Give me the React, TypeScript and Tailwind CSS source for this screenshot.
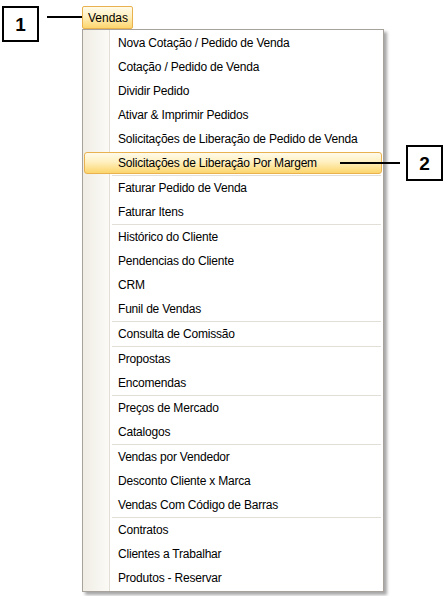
const groups: string[][] = [
  [
    "Nova Cotação / Pedido de Venda",
    "Cotação / Pedido de Venda",
    "Dividir Pedido",
    "Ativar & Imprimir Pedidos",
    "Solicitações de Liberação de Pedido de Venda",
    "Solicitações de Liberação Por Margem",
  ],
  ["Faturar Pedido de Venda", "Faturar Itens"],
  ["Histórico do Cliente", "Pendencias do Cliente", "CRM", "Funil de Vendas"],
  ["Consulta de Comissão"],
  ["Propostas", "Encomendas"],
  ["Preços de Mercado", "Catalogos"],
  ["Vendas por Vendedor", "Desconto Cliente x Marca", "Vendas Com Código de Barras"],
  ["Contratos", "Clientes a Trabalhar", "Produtos - Reservar"],
];

const active = "Solicitações de Liberação Por Margem";

const MenuItem = ({ label }: { label: string }) => {
  const isActive = label === active;
  return (
    <div className="h-[24px] py-[1px]">
      <div
        className={
          isActive
            ? "h-[22px] flex items-center pl-[33px] border border-[#e9b24f] rounded-[3px] bg-[linear-gradient(to_bottom,#fffbea_0%,#fff0c0_45%,#fcd56c_100%)]"
            : "h-[22px] flex items-center pl-[33px] border border-transparent"
        }
      >
        {label}
      </div>
    </div>
  );
};

const Callout = ({ n }: { n: string }) => (
  <div className="w-[37px] h-[36px] shrink-0 border-2 border-black bg-white flex items-center justify-center font-bold text-[19px] leading-none text-black">
    {n}
  </div>
);

export default function App() {
  return (
    <div
      className="relative w-[448px] h-[596px] bg-white overflow-hidden text-black"
      style={{ fontFamily: '"Liberation Sans", Arial, sans-serif' }}
    >
      <div className="flex items-start pt-[6px] pl-[2px]">
        {/* 1 */}
        <Callout n="1" />
        <div className="mt-[10px] ml-[8px] w-[35px] h-[2px] bg-black" />

        <div className="flex flex-col">
          {/* botão Vendas */}
          <div className="w-[51px] h-[23px] flex items-center pl-[5px] text-[12px] border border-[#e9b24f] rounded-[2px] bg-[linear-gradient(to_bottom,#fffbea_0%,#fff0c0_45%,#fcd56c_100%)]">
            Vendas
          </div>

          {/* menu */}
          <div className="w-[302px] border border-[#a7a39c] p-[1px] text-[12px] tracking-[-0.2px] shadow-[3px_3px_3px_rgba(0,0,0,0.35)] bg-[linear-gradient(to_right,#efede4_0px,#fbfaf6_26px,#e2dfd6_26px,#e2dfd6_27px,#ffffff_27px)]">
            {groups.map((g, i) => (
              <div key={i}>
                {i > 0 && <div className="h-[1px] ml-[28px] mr-[1px] bg-[#e2dfd6]" />}
                {g.map((label) => (
                  <MenuItem key={label} label={label} />
                ))}
              </div>
            ))}
          </div>
        </div>
      </div>

      {/* 2 */}
      <div className="absolute left-[340px] top-[145px] flex items-center gap-[6px]">
        <div className="w-[60px] h-[2px] bg-black" />
        <Callout n="2" />
      </div>
    </div>
  );
}
